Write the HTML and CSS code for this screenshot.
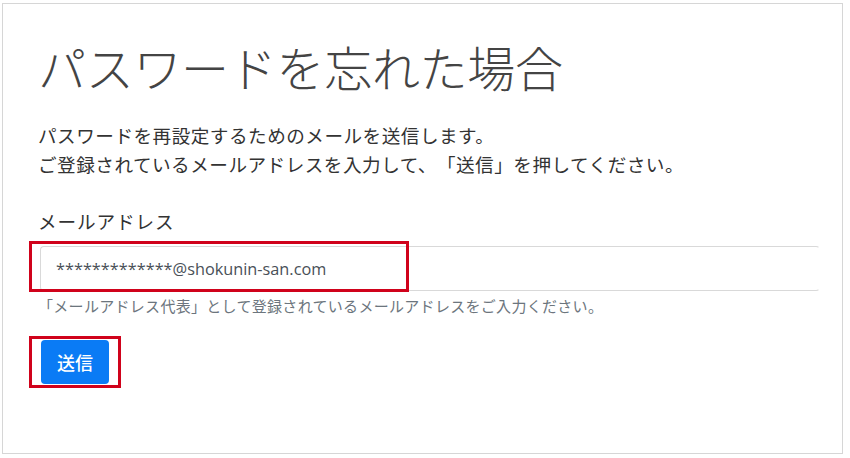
FILE: index.html
```html
<!DOCTYPE html>
<html lang="ja">
<head>
    <meta charset="UTF-8">
    <title>パスワードを忘れた場合</title>
    <link rel="stylesheet" href="styles.css">
</head>
<body>
    <div class="frame">
        <h1 class="title">パスワードを忘れた場合</h1>

        <p class="lead">
            パスワードを再設定するためのメールを送信します。<br>
            ご登録されているメールアドレスを入力して、「送信」を押してください。
        </p>

        <form class="reset-form">
            <label class="field-label" for="email">メールアドレス</label>
            <div class="field">
                <input id="email" class="field-input" type="text" value="*************@shokunin-san.com">
                <span class="mark mark-input"></span>
            </div>
            <small class="field-help">「メールアドレス代表」として登録されているメールアドレスをご入力ください。</small>

            <div class="actions">
                <button type="button" class="send-button">送信</button>
                <span class="mark mark-button"></span>
            </div>
        </form>
    </div>
</body>
</html>
```

FILE: styles.css
```css
* {
    margin: 0;
    padding: 0;
    box-sizing: border-box;
}

body {
    font-family: "Noto Sans CJK JP", "Noto Sans", sans-serif;
    background: #fff;
    color: #333;
    padding: 3px 7px 4px 2px;
    text-spacing-trim: space-all;
}

.frame {
    width: 841px;
    height: 451px;
    border: 1px solid #d6d6d6;
    padding: 30px 26px 0 35px;
}

.title {
    font-size: 48px;
    font-weight: 300;
    line-height: 64px;
    color: #444;
    letter-spacing: -0.3px;
}

.lead {
    margin-top: 22px;
    font-size: 18.6px;
    line-height: 29px;
    letter-spacing: 0.5px;
    color: #333;
}

.reset-form {
    margin-top: 30px;
}

.field-label {
    display: block;
    font-size: 18.6px;
    line-height: 26px;
    letter-spacing: 0.9px;
    color: #333;
    margin-bottom: 12px;
}

.field {
    position: relative;
}

.field-input {
    display: block;
    width: 780px;
    height: 45px;
    margin-left: 2px;
    padding: 0 15px;
    border: 1px solid #d9d9d9;
    border-right-color: #fff;
    border-radius: 4px;
    font-family: "Open Sans", "Noto Sans", sans-serif;
    font-size: 16.3px;
    color: #495057;
    background: #fff;
}

.field-help {
    display: block;
    margin-top: 5px;
    font-size: 15px;
    line-height: 20px;
    letter-spacing: 0.3px;
    color: #6c757d;
}

.actions {
    position: relative;
    margin-top: 24px;
    padding-left: 3px;
}

.send-button {
    background: #0a7bf5;
    color: #fff;
    border: none;
    border-radius: 4px;
    width: 68px;
    height: 44px;
    font-family: "Noto Sans CJK JP", sans-serif;
    font-size: 18px;
    font-weight: 500;
}

.mark {
    position: absolute;
    border: 3px solid #d0021b;
    pointer-events: none;
}

.mark-input {
    left: -9px;
    top: -5px;
    width: 380px;
    height: 51px;
}

.mark-button {
    left: -9px;
    top: -4px;
    width: 92px;
    height: 52px;
}
```
